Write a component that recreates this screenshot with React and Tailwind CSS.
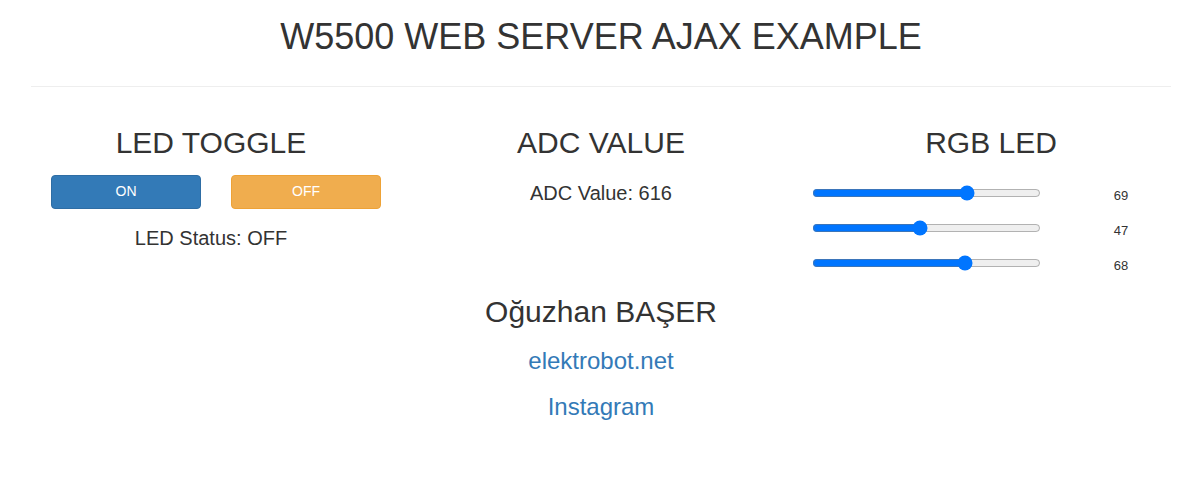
const sliders = [69, 47, 68];

function App() {
  return (
    <div className="w-[1195px] min-h-[487px] bg-white text-[#333] font-['Liberation_Sans',Arial,sans-serif]">
      <div className="w-[1170px] ml-[16px] px-[15px]">
        <h1 className="text-[36px] leading-[1.1] text-center pt-[17px]">W5500 WEB SERVER AJAX EXAMPLE</h1>
        <hr className="mt-[29px] border-0 border-t border-[#eee]" />
      </div>

      <div className="w-[1170px] ml-[16px] flex mt-[39px]">
        <div className="w-[390px] flex flex-col items-center">
          <h2 className="text-[30px] leading-[1.1]">LED TOGGLE</h2>
          <div className="flex self-start ml-[35px] mt-[16px] gap-[30px]">
            <button className="w-[150px] h-[34px] rounded-[4px] bg-[#337ab7] border border-[#2e6da4] text-white text-[14px]">ON</button>
            <button className="w-[150px] h-[34px] rounded-[4px] bg-[#f0ad4e] border border-[#eea236] text-white text-[14px]">OFF</button>
          </div>
          <p className="text-[20px] leading-[1.1] mt-[18px]">LED Status: OFF</p>
        </div>

        <div className="w-[390px] flex flex-col items-center">
          <h2 className="text-[30px] leading-[1.1]">ADC VALUE</h2>
          <p className="text-[20px] leading-[1.1] mt-[23px]">ADC Value: 616</p>
        </div>

        <div className="w-[390px] flex flex-col items-center">
          <h2 className="text-[30px] leading-[1.1]">RGB LED</h2>
          <div className="self-start ml-[16px] mt-[17px] flex flex-col">
            {sliders.map((v, i) => (
              <div key={i} className="flex items-center h-[35px]">
                <input type="range" min="0" max="100" defaultValue={v} className="w-[229px] m-0" />
                <span className="ml-[60px] w-[40px] text-center text-[13px] pt-[5px]">{v}</span>
              </div>
            ))}
          </div>
        </div>
      </div>

      <div className="flex flex-col items-center ml-[7px] mt-[14px]">
        <h2 className="text-[30px] leading-[1.1]">Oğuzhan BAŞER</h2>
        <a href="#" className="text-[24px] leading-[1.1] text-[#337ab7] mt-[20px]">elektrobot.net</a>
        <a href="#" className="text-[24px] leading-[1.1] text-[#337ab7] mt-[20px]">Instagram</a>
      </div>
    </div>
  );
}

export default App;
